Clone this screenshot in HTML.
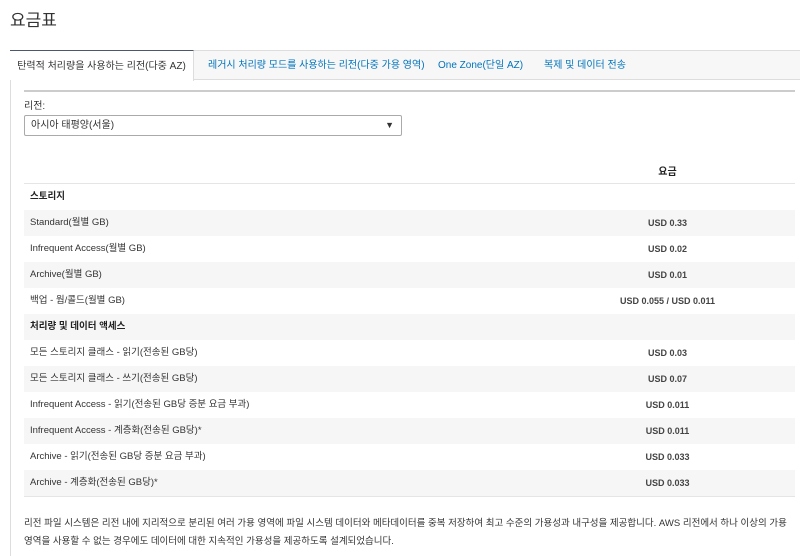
<!DOCTYPE html><html><head><meta charset="utf-8"><style>
body{margin:0;width:800px;height:556px;background:#fff;font-family:"Liberation Sans","Noto Sans CJK KR",sans-serif;color:#232f3e;position:relative;overflow:hidden}
.a{position:absolute;white-space:nowrap}
.title{left:10px;top:6px;font-size:17px;color:#333}
.tabbar{left:10px;top:50px;width:790px;height:30px;background:#f7f7f7;border-top:1px solid #ddd;border-bottom:1px solid #ddd;box-sizing:border-box}
.tab{top:50px;height:31px;font-size:10px;line-height:31px;color:#0073bb}
.act{left:10px;width:184px;background:#fff;border-top:1px solid #4a5a6a;border-right:1px solid #ddd;box-sizing:border-box;color:#333;text-align:center}
.vl{left:10px;top:80px;width:1px;height:476px;background:#ddd}
.sep{left:24px;top:90px;width:771px;height:2px;background:#ccc}
.lbl{left:24px;top:97px;font-size:10px;color:#333}
.sel{left:24px;top:115px;width:378px;height:21px;border:1px solid #aaa;border-radius:2px;box-sizing:border-box;font-size:10px;line-height:19px;padding-left:6px;color:#333}
.sel span{position:absolute;right:7px;top:0;font-size:9px}
.row{left:24px;width:771px;height:26px;font-size:9.5px;line-height:26px;color:#333}
.row .k{position:absolute;left:6px}
.row .v{position:absolute;left:516px;width:255px;text-align:center;font-weight:bold;font-size:9px;color:#444}
.g{background:#f6f6f6}
.b{font-weight:bold;color:#222}
.p{left:24px;font-size:9.5px;color:#333}
</style></head><body>
<div class="a title">요금표</div>
<div class="a tabbar"></div>
<div class="a tab act">탄력적 처리량을 사용하는 리전(다중 AZ)</div>
<div class="a tab" style="left:208px">레거시 처리량 모드를 사용하는 리전(다중 가용 영역)</div>
<div class="a tab" style="left:438px">One Zone(단일 AZ)</div>
<div class="a tab" style="left:544px">복제 및 데이터 전송</div>
<div class="a vl"></div>
<div class="a sep"></div>
<div class="a lbl">리전:</div>
<div class="a sel">아시아 태평양(서울)<span>▼</span></div>
<div class="a b" style="left:540px;width:255px;text-align:center;top:163px;font-size:10px">요금</div>
<div class="a" style="left:24px;top:183px;width:771px;height:1px;background:#e5e5e5"></div>
<div class="a row" style="top:184px"><span class="k b">스토리지</span></div>
<div class="a row g" style="top:210px"><span class="k">Standard(월별 GB)</span><span class="v">USD 0.33</span></div>
<div class="a row" style="top:236px"><span class="k">Infrequent Access(월별 GB)</span><span class="v">USD 0.02</span></div>
<div class="a row g" style="top:262px"><span class="k">Archive(월별 GB)</span><span class="v">USD 0.01</span></div>
<div class="a row" style="top:288px"><span class="k">백업 - 웜/콜드(월별 GB)</span><span class="v">USD 0.055 / USD 0.011</span></div>
<div class="a row g" style="top:314px"><span class="k b">처리량 및 데이터 액세스</span></div>
<div class="a row" style="top:340px"><span class="k">모든 스토리지 클래스 - 읽기(전송된 GB당)</span><span class="v">USD 0.03</span></div>
<div class="a row g" style="top:366px"><span class="k">모든 스토리지 클래스 - 쓰기(전송된 GB당)</span><span class="v">USD 0.07</span></div>
<div class="a row" style="top:392px"><span class="k">Infrequent Access - 읽기(전송된 GB당 증분 요금 부과)</span><span class="v">USD 0.011</span></div>
<div class="a row g" style="top:418px"><span class="k">Infrequent Access - 계층화(전송된 GB당)*</span><span class="v">USD 0.011</span></div>
<div class="a row" style="top:444px"><span class="k">Archive - 읽기(전송된 GB당 증분 요금 부과)</span><span class="v">USD 0.033</span></div>
<div class="a row g" style="top:470px"><span class="k">Archive - 계층화(전송된 GB당)*</span><span class="v">USD 0.033</span></div>
<div class="a" style="left:24px;top:496px;width:771px;height:1px;background:#e5e5e5"></div>
<div class="a p" style="top:515px">리전 파일 시스템은 리전 내에 지리적으로 분리된 여러 가용 영역에 파일 시스템 데이터와 메타데이터를 중복 저장하여 최고 수준의 가용성과 내구성을 제공합니다. AWS 리전에서 하나 이상의 가용</div>
<div class="a p" style="top:533px">영역을 사용할 수 없는 경우에도 데이터에 대한 지속적인 가용성을 제공하도록 설계되었습니다.</div>
</body></html>
